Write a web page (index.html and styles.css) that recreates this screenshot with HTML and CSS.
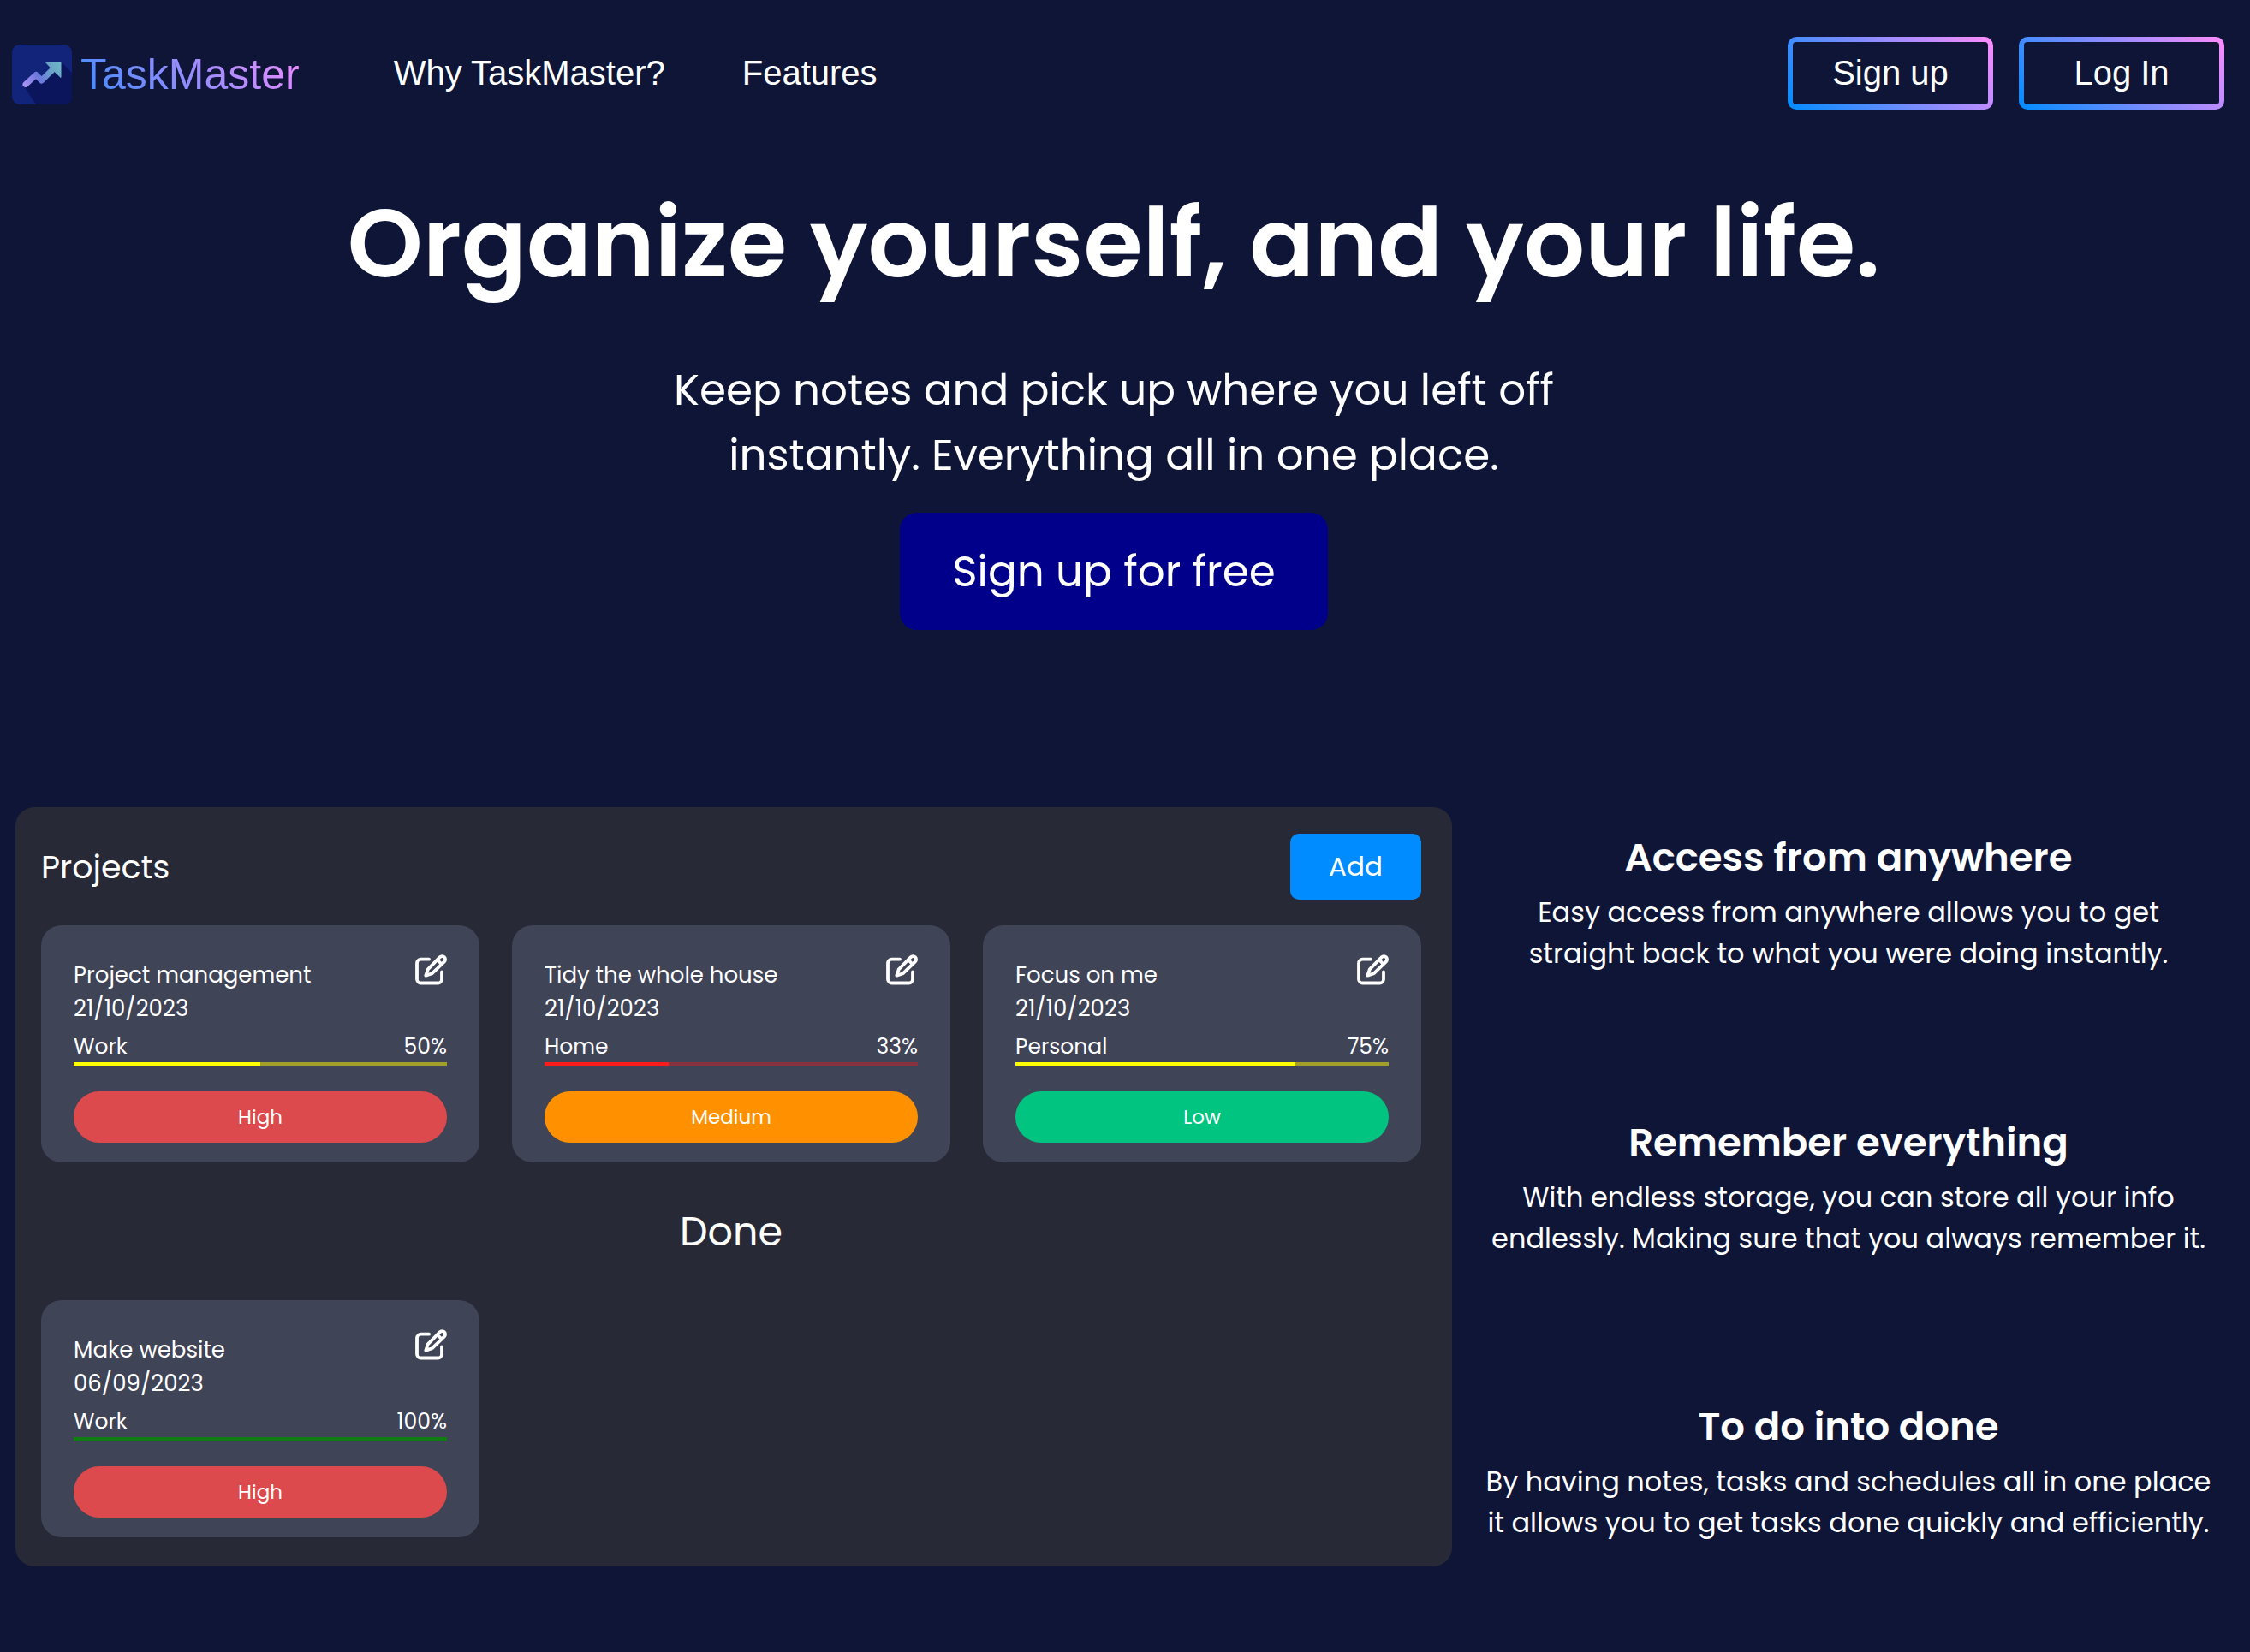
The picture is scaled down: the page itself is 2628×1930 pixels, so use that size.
FILE: index.html
```html
<!DOCTYPE html>
<html lang="en">
<head>
  <meta charset="utf-8">
  <meta name="viewport" content="width=device-width, initial-scale=1">
  <title>TaskMaster</title>
  <link rel="stylesheet" href="styles.css">
</head>
<body>
  <svg width="0" height="0" class="sprite" aria-hidden="true">
    <symbol id="edit" viewBox="0 0 37 36">
      <g fill="none" stroke="currentColor" stroke-width="3.8" stroke-linecap="round" stroke-linejoin="round">
        <path d="M16 5.7H6.5A4.5 4.5 0 0 0 2 10.2V29a4.5 4.5 0 0 0 4.500 4.500H26.500A4.500 4.500 0 0 0 31 29V20.500"/>
        <path d="M12.300 24.600L14.800 17.300L28.800 3.200A3.500 3.500 0 0 1 34 8.300L19.800 22.200Z"/>
        <path d="M26 6.500L30.500 11"/>
      </g>
    </symbol>
  </svg>

  <header class="topbar">
    <a class="brand" href="#">
      <svg class="brand-mark" viewBox="0 0 70 70" aria-hidden="true">
        <defs>
          <linearGradient id="arrow" gradientUnits="userSpaceOnUse" x1="14" y1="48" x2="57" y2="24">
            <stop offset="0" stop-color="#ac93f2"/>
            <stop offset=".4" stop-color="#6c78dc"/>
            <stop offset=".75" stop-color="#6aa4c8"/>
            <stop offset="1" stop-color="#6cb8c4"/>
          </linearGradient>
          <clipPath id="tile"><rect width="70" height="70" rx="9"/></clipPath>
        </defs>
        <g clip-path="url(#tile)">
          <rect width="70" height="70" fill="#12237a"/>
          <path d="M14 49L28 70H70V33L57 20L34 42L28 35Z" fill="#0a155c"/>
        </g>
        <path d="M16 46.500L28 35.500L34.500 42L50 27" fill="none" stroke="url(#arrow)" stroke-width="7" stroke-linecap="round" stroke-linejoin="round"/>
        <path d="M39 20.500H57V38.500L48 30Z" fill="url(#arrow)" stroke="url(#arrow)" stroke-width="1" stroke-linejoin="round"/>
      </svg>
      <span class="brand-name">TaskMaster</span>
    </a>
    <nav class="links">
      <a href="#why">Why TaskMaster?</a>
      <a href="#features">Features</a>
    </nav>
    <div class="account">
      <button class="outline" type="button">Sign up</button>
      <button class="outline" type="button">Log In</button>
    </div>
  </header>

  <main>
    <section class="hero">
      <h1>Organize yourself, and your life.</h1>
      <p>Keep notes and pick up where you left off<br>instantly. Everything all in one place.</p>
      <button class="cta" type="button">Sign up for free</button>
    </section>

    <section class="showcase" id="features">
      <div class="panel">
        <div class="panel-head">
          <h2>Projects</h2>
          <button class="add" type="button">Add</button>
        </div>
        <div class="cards">
          <article class="card">
            <div class="card-head">
              <div class="card-title"><h3>Project management</h3><time>21/10/2023</time></div>
              <button class="edit" type="button" aria-label="Edit"><svg><use href="#edit"/></svg></button>
            </div>
            <div class="status"><span>Work</span><span>50%</span></div>
            <div class="bar yellow"><div class="fill" style="width:50%"></div></div>
            <div class="pill high">High</div>
          </article>
          <article class="card">
            <div class="card-head">
              <div class="card-title"><h3>Tidy the whole house</h3><time>21/10/2023</time></div>
              <button class="edit" type="button" aria-label="Edit"><svg><use href="#edit"/></svg></button>
            </div>
            <div class="status"><span>Home</span><span>33%</span></div>
            <div class="bar red"><div class="fill" style="width:33.33%"></div></div>
            <div class="pill medium">Medium</div>
          </article>
          <article class="card">
            <div class="card-head">
              <div class="card-title"><h3>Focus on me</h3><time>21/10/2023</time></div>
              <button class="edit" type="button" aria-label="Edit"><svg><use href="#edit"/></svg></button>
            </div>
            <div class="status"><span>Personal</span><span>75%</span></div>
            <div class="bar yellow"><div class="fill" style="width:75%"></div></div>
            <div class="pill low">Low</div>
          </article>
        </div>
        <h2 class="done">Done</h2>
        <div class="cards">
          <article class="card">
            <div class="card-head">
              <div class="card-title"><h3>Make website</h3><time>06/09/2023</time></div>
              <button class="edit" type="button" aria-label="Edit"><svg><use href="#edit"/></svg></button>
            </div>
            <div class="status"><span>Work</span><span>100%</span></div>
            <div class="bar green"><div class="fill" style="width:100%"></div></div>
            <div class="pill high">High</div>
          </article>
        </div>
      </div>

      <div class="benefits" id="why">
        <article>
          <h2>Access from anywhere</h2>
          <p>Easy access from anywhere allows you to get<br>straight back to what you were doing instantly.</p>
        </article>
        <article>
          <h2>Remember everything</h2>
          <p>With endless storage, you can store all your info<br>endlessly. Making sure that you always remember it.</p>
        </article>
        <article>
          <h2>To do into done</h2>
          <p>By having notes, tasks and schedules all in one place<br>it allows you to get tasks done quickly and efficiently.</p>
        </article>
      </div>
    </section>
  </main>
</body>
</html>
```

FILE: styles.css
```css
* {
  box-sizing: border-box;
  margin: 0;
  padding: 0;
}

body {
  min-height: 100vh;
  background: #0e1537;
  color: #fff;
  font-family: Poppins, Inter, sans-serif;
}

button {
  border: 0;
  color: inherit;
  font: inherit;
  cursor: pointer;
}

a {
  color: inherit;
  text-decoration: none;
}

.sprite {
  position: absolute;
}

/* Top bar */

.topbar {
  display: flex;
  align-items: center;
  height: 170px;
  padding: 0 30px 0 14px;
  font-family: Arial, "Liberation Sans", sans-serif;
  font-size: 40px;
}

.brand {
  display: flex;
  align-items: center;
  gap: 10px;
  padding-top: 4px;
}

.brand-mark {
  width: 70px;
  height: 70px;
}

.brand-name {
  background: linear-gradient(45deg, #3a8cff, #f48cff);
  background-clip: text;
  color: transparent;
  font-size: 50px;
}

.links {
  display: flex;
  gap: 90px;
  margin-left: 110px;
}

.account {
  display: flex;
  gap: 30px;
  margin-left: auto;
}

.outline {
  width: 240px;
  height: 85px;
  border: 6px solid transparent;
  border-radius: 10px;
  background:
    linear-gradient(#0e1537, #0e1537) padding-box,
    linear-gradient(45deg, #008cff, #ff8cff) border-box;
}

/* Hero */

.hero {
  display: flex;
  flex-direction: column;
  align-items: center;
  padding: 30px 26px 207px 0;
  text-align: center;
}

.hero h1 {
  font-size: 112px;
  font-weight: 600;
  line-height: 168px;
}

.hero p {
  margin: 50px 0 29px;
  font-size: 50px;
  line-height: 76px;
}

.cta {
  height: 137px;
  padding: 0 61px;
  border-radius: 20px;
  background: #00008b;
  font-size: 50px;
}

/* Showcase */

.showcase {
  display: grid;
  grid-template-columns: 1678fr 878fr;
  gap: 24px;
  padding: 0 30px 100px 18px;
}

.panel {
  padding: 31px 36px 34px 30px;
  border-radius: 22px;
  background: #282937;
}

.panel-head {
  display: flex;
  align-items: center;
  justify-content: space-between;
  margin-bottom: 30px;
}

.panel h2 {
  font-size: 38px;
  font-weight: 400;
  line-height: 56px;
}

.add {
  width: 153px;
  height: 77px;
  border-radius: 10px;
  background: #008cff;
  font-size: 31px;
}

.cards {
  display: grid;
  grid-template-columns: repeat(3, 1fr);
  gap: 38px;
}

.panel .done {
  margin: 47px 0 46px;
  font-size: 46px;
  line-height: 68px;
  text-align: center;
}

.card {
  padding: 34px 38px 23px;
  border-radius: 24px;
  background: #404457;
}

.card-head {
  display: flex;
  justify-content: space-between;
  font-size: 26px;
  line-height: 39px;
}

.card-title {
  padding-top: 5px;
}

.card h3 {
  font-size: 26px;
  font-weight: 400;
}

.card time {
  display: block;
}

.edit {
  width: 37px;
  height: 36px;
  background: none;
}

.edit svg {
  display: block;
  width: 37px;
  height: 36px;
}

.status {
  display: flex;
  justify-content: space-between;
  margin-top: 6px;
  font-size: 25px;
  line-height: 37px;
}

.bar {
  height: 4px;
  margin-bottom: 30px;
}

.fill {
  height: 4px;
}

.yellow { background: #a0a02b; }
.yellow .fill { background: #ffff00; }
.red { background: #86323f; }
.red .fill { background: #fc1c1c; }
.green .fill { background: #0f7d12; }

.pill {
  border-radius: 30px;
  font-size: 23px;
  line-height: 60px;
  text-align: center;
}

.high { background: #dc4a4d; }
.medium { background: #ff9100; }
.low { background: #00c47f; }

.benefits {
  display: flex;
  flex-direction: column;
  justify-content: space-between;
  padding: 25px 0 27px;
  text-align: center;
}

.benefits h2 {
  margin-bottom: 6px;
  font-size: 45px;
  font-weight: 600;
  line-height: 68px;
}

.benefits p {
  font-size: 32px;
  line-height: 48px;
}
```
